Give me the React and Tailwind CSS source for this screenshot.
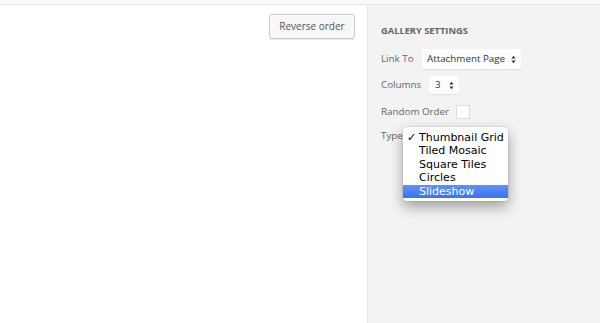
import React from "react";

function Arrows() {
  return (
    <svg width="5" height="9" viewBox="0 0 5 9" className="shrink-0">
      <path d="M2.5 0.8 L4.6 3.6 H0.4 Z" fill="#333" />
      <path d="M2.5 8.2 L4.6 5.4 H0.4 Z" fill="#333" />
    </svg>
  );
}

export default function App() {
  const items = ["Thumbnail Grid", "Tiled Mosaic", "Square Tiles", "Circles", "Slideshow"];
  return (
    <div className="w-[600px] h-[323px] bg-white flex flex-col overflow-hidden whitespace-nowrap" style={{ fontFamily: '"Open Sans", sans-serif' }}>
      <div className="h-[5px] bg-[#fafafa] border-b border-[#e5e5e5] shrink-0" />
      <div className="flex flex-1">
        <div className="w-[367px] flex justify-end pt-[9px] pr-[12px]">
          <div className="w-[86px] h-[25px] flex items-center justify-center border border-[#cccccc] rounded-[3px] bg-[#f7f7f7] shadow-[inset_0_1px_0_#fff,0_1px_0_rgba(0,0,0,0.08)] text-[10px] text-[#555] self-start">
            Reverse order
          </div>
        </div>
        <div className="flex-1 bg-[#f3f3f3] border-l border-[#e8e8e8] pl-[13px] pt-[19px] text-[9.8px] text-[#666] relative">
          <div className="font-bold uppercase text-[9.3px] text-[#666] leading-[14px]">Gallery Settings</div>
          <div className="flex items-center mt-[11px] h-[20px]">
            <span className="w-[41px]">Link To</span>
            <div className="w-[99px] h-[20px] bg-white rounded-[3px] flex items-center justify-between pl-[5px] pr-[5px] text-[#333] shadow-[0_1px_1px_rgba(0,0,0,0.08)]">
              <span>Attachment Page</span>
              <Arrows />
            </div>
          </div>
          <div className="flex items-center mt-[7px] h-[18px]">
            <span className="w-[48px]">Columns</span>
            <div className="w-[30px] h-[18px] bg-white rounded-[3px] flex items-center justify-between pl-[6px] pr-[5px] text-[#333] shadow-[0_1px_1px_rgba(0,0,0,0.08)]">
              <span>3</span>
              <Arrows />
            </div>
          </div>
          <div className="flex items-center mt-[11px] h-[14px]">
            <span className="w-[75px]">Random Order</span>
            <div className="w-[14px] h-[14px] bg-white border border-[#dddddd]" />
          </div>
          <div className="flex items-center mt-[10px] h-[15px]">
            <span>Type</span>
          </div>
          <div
            className="absolute left-[35px] top-[122px] w-[105px] bg-white rounded-[4px] pt-[4px] pb-[3px] shadow-[0_6px_14px_rgba(0,0,0,0.35),0_0_0_1px_rgba(0,0,0,0.06)] text-[11px] text-black leading-[13.4px]"
            style={{ fontFamily: '"DejaVu Sans", sans-serif' }}
          >
            {items.map((t, i) => (
              <div
                key={t}
                className={
                  "flex items-center h-[13.4px] " +
                  (i === 4 ? "bg-gradient-to-b from-[#5d93f6] to-[#3a73ee] text-white" : "")
                }
              >
                <span className="w-[16px] pl-[4px] text-[11px]">{i === 0 ? "✓" : ""}</span>
                <span>{t}</span>
              </div>
            ))}
          </div>
        </div>
      </div>
    </div>
  );
}
